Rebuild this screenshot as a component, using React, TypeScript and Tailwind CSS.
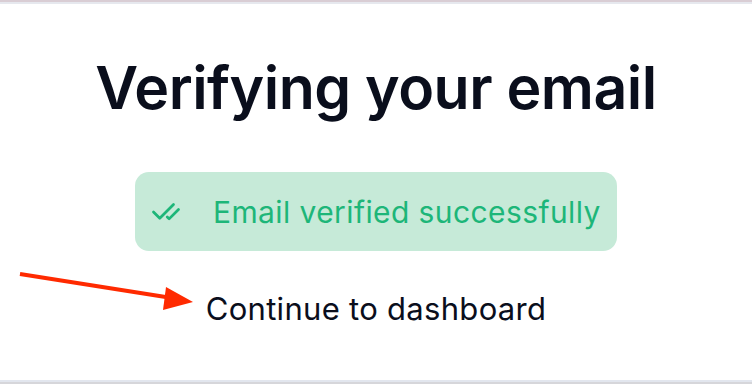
import { CheckCheck } from "lucide-react";

const Arrow = () => (
  <svg
    className="absolute left-0 top-0 pointer-events-none"
    width="752"
    height="384"
    viewBox="0 0 752 384"
  >
    <line x1="20" y1="274" x2="172" y2="298" stroke="#ff2a00" strokeWidth="4" />
    <polygon points="193,302 166,287 163,310" fill="#ff2a00" />
  </svg>
);

export default function App() {
  return (
    <div className="relative h-[384px] w-[752px] overflow-hidden bg-white font-['Inter',sans-serif]">
      <div className="h-[2px] bg-[#d9cdd4]" />
      <div className="h-[2px] bg-[#e6e8ee]" />
      <div className="flex h-[376px] flex-col items-center">
        <h1 className="mt-[48px] text-[59px] font-semibold leading-[72px] tracking-[-0.5px] text-[#0a0e1c]">
          Verifying your email
        </h1>
        <div className="mt-[48px] flex h-[79px] w-[482px] items-center gap-[32px] rounded-[14px] bg-[#c6ead8] pl-[16px] text-[#1db679]">
          <CheckCheck size={30} strokeWidth={2.2} />
          <span className="text-[30px] leading-none tracking-[0.4px]">Email verified successfully</span>
        </div>
        <a className="mt-[42px] text-[31px] leading-none tracking-[0.3px] text-[#0a0e1c]">
          Continue to dashboard
        </a>
      </div>
      <div className="h-[2px] bg-[#e2e6ee]" />
      <div className="h-[2px] bg-[#d6d6da]" />
      <Arrow />
    </div>
  );
}
